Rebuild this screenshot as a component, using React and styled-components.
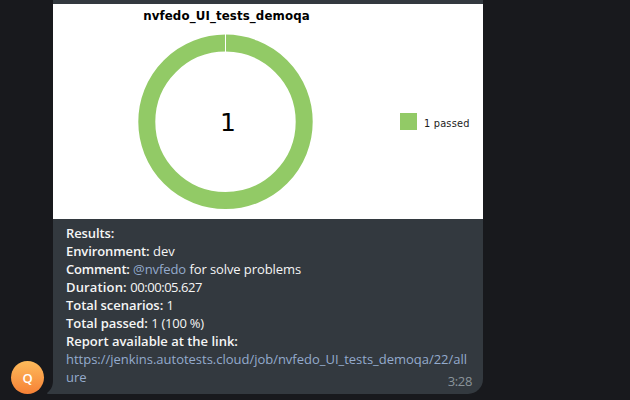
import React from "react";
import styled, { createGlobalStyle } from "styled-components";

const GlobalStyle = createGlobalStyle`
  body { margin: 0; background: #18191d; overflow: hidden; }
`;

const Chat = styled.main`
  box-sizing: border-box;
  width: 630px;
  height: 400px;
  padding: 0 0 6px 11px;
  display: flex;
  align-items: flex-end;
  background: #18191d;
  font-family: "Open Sans", sans-serif;
`;

const Avatar = styled.div`
  width: 33px;
  height: 33px;
  margin-right: 9px;
  border-radius: 50%;
  display: flex;
  align-items: center;
  justify-content: center;
  background: linear-gradient(#febb5b, #f68136);
  color: #fff;
  font-size: 13px;
  font-weight: 600;
`;

const Bubble = styled.article`
  position: relative;
  width: 430px;
  height: 394px;
  display: flex;
  flex-direction: column;
  background: #33393f;
  border-radius: 0 0 15px 0;
`;

const Tail = styled.svg`
  position: absolute;
  left: -6px;
  bottom: 0;
`;

const Chart = styled.figure`
  box-sizing: border-box;
  margin: 4px 0 0;
  height: 215px;
  padding-left: 85px;
  display: grid;
  grid-template-columns: 175px 1fr;
  grid-template-rows: 25px 1fr;
  background: #fff;
  color: #000;
  font-family: "DejaVu Sans", sans-serif;
`;

const ChartTitle = styled.figcaption`
  grid-column: 1;
  justify-self: center;
  margin-left: 2px;
  line-height: 24px;
  font-size: 11.8px;
  letter-spacing: 0.12px;
  font-weight: 700;
  white-space: nowrap;
`;

const Donut = styled.svg`
  grid-column: 1;
  grid-row: 2;
  display: block;
  overflow: visible;
`;

const Total = styled.text`
  font-size: 25px;
  text-anchor: middle;
`;

const Legend = styled.div`
  grid-column: 2;
  grid-row: 2;
  height: 17px;
  margin: 84px 0 0 87px;
  display: flex;
  align-items: center;
  gap: 7px;
  line-height: 17px;
  font-size: 9.8px;
  letter-spacing: 0.2px;
  white-space: nowrap;
`;

const Swatch = styled.span`
  width: 17px;
  height: 17px;
  background: #92ca66;
`;

const LegendLabel = styled.span`
  padding-top: 3px;
  color: #1c1c1c;
`;

const Message = styled.div`
  padding: 5px 13px 0;
  color: #f5f5f5;
  font-size: 13px;
  line-height: 18px;
`;

const Line = styled.div`
  height: 18px;
  white-space: pre;
`;

const Label = styled.strong`
  font-weight: 600;
  letter-spacing: ${({ $tracking = 0 }) => $tracking}px;
`;

const Value = styled.span`
  letter-spacing: ${({ $tracking = 0 }) => $tracking}px;
`;

const Link = styled.a`
  color: #94abcd;
  letter-spacing: ${({ $tracking = 0 }) => $tracking}px;
`;

const LastLine = styled(Line)`
  display: flex;
  justify-content: space-between;
`;

const Time = styled.time`
  margin: 4px -2px 0 0;
  color: #8a949a;
  letter-spacing: -0.35px;
`;

const results = [
  { label: "Results:", labelTracking: -0.12 },
  { label: "Environment:", labelTracking: -0.1, value: "dev" },
  { label: "Comment:", labelTracking: -0.22, mention: "@nvfedo", value: "for solve problems", tracking: -0.09 },
  { label: "Duration:", labelTracking: 0.15, value: "00:00:05.627", tracking: -0.44 },
  { label: "Total scenarios:", labelTracking: -0.06, value: "1" },
  { label: "Total passed:", labelTracking: -0.05, value: "1 (100 %)", tracking: -0.25 },
  { label: "Report available at the link:", labelTracking: -0.01 },
];

export default function App() {
  return (
    <Chat>
      <GlobalStyle />
      <Avatar>Q</Avatar>
      <Bubble>
        <Tail width="7" height="16" viewBox="0 0 7 16">
          <path d="M7 0H6V2C6 8 4 12 .5 14.5C-.2 15.2 0 16 1 16H7Z" fill="#33393f" />
        </Tail>
        <Chart>
          <ChartTitle>nvfedo_UI_tests_demoqa</ChartTitle>
          <Donut width="175" height="190" viewBox="0 0 175 190">
            <circle cx="87.5" cy="92.8" r="78.7" fill="none" stroke="#92ca66" strokeWidth="17" />
            <path d="M87.5 5V24" stroke="#fff" strokeWidth="1" />
            <Total x="90" y="102">1</Total>
          </Donut>
          <Legend>
            <Swatch />
            <LegendLabel>1 passed</LegendLabel>
          </Legend>
        </Chart>
        <Message>
          {results.map(({ label, labelTracking, mention, value, tracking }) => (
            <Line key={label}>
              <Label $tracking={labelTracking}>{label}</Label>
              {mention && <> <Link $tracking={tracking}>{mention}</Link></>}
              {value && <> <Value $tracking={tracking}>{value}</Value></>}
            </Line>
          ))}
          <Line><Link $tracking={-0.015}>https://jenkins.autotests.cloud/job/nvfedo_UI_tests_demoqa/22/all</Link></Line>
          <LastLine><Link>ure</Link><Time>3:28</Time></LastLine>
        </Message>
      </Bubble>
    </Chat>
  );
}
